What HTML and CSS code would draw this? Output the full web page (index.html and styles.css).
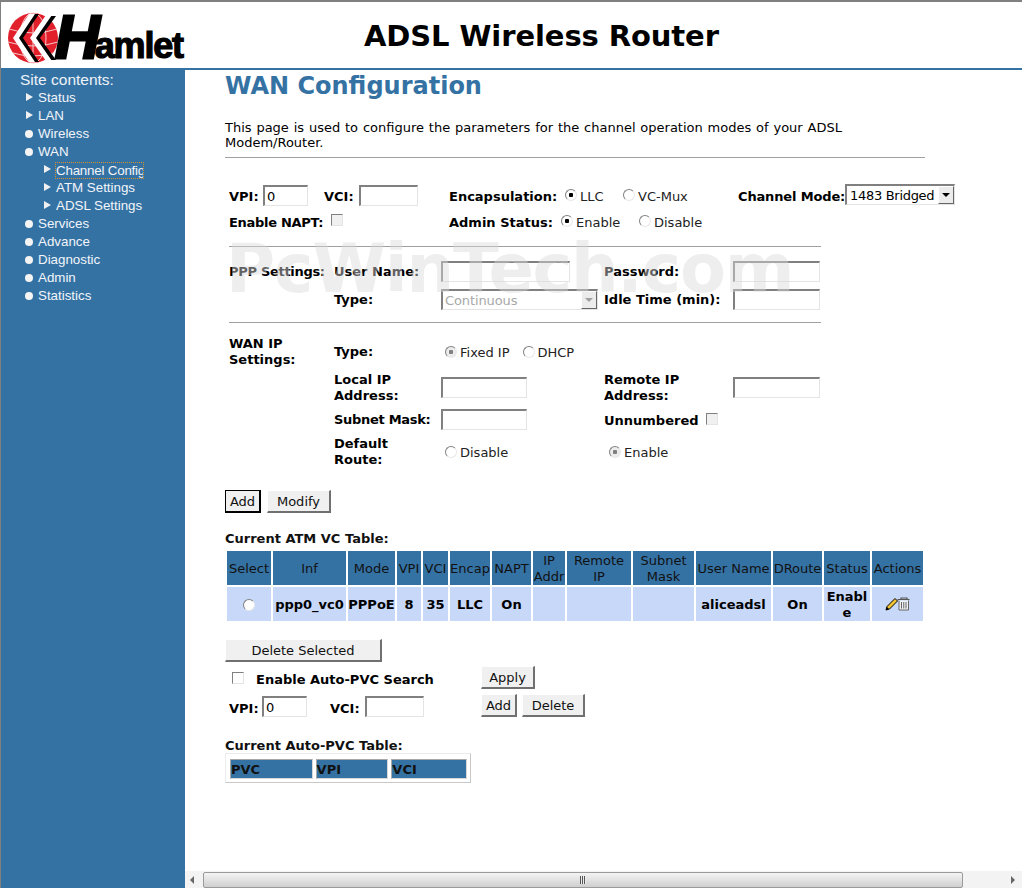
FILE: index.html
```html
<!DOCTYPE html>
<html lang="en">
<head>
  <meta charset="UTF-8" />
  <title>ADSL Wireless Router</title>
  <link rel="stylesheet" href="styles.css">
</head>
<body>
  <div class="page">
    <header class="top">
      <div class="logo">
        <svg class="globe" viewBox="0 0 54 52" width="54" height="52">
          <circle cx="26" cy="26" r="25" fill="#e2202c"/>
          <g fill="none" stroke="#f6c9c9" stroke-width="1">
            <ellipse cx="26" cy="26" rx="13" ry="25"/>
            <path d="M26 1V51M2 17Q26 25 50 17M1 30Q26 38 51 30M6 41Q26 47 46 41"/>
          </g>
          <path d="M26 2H32L16 26L32 50H26L9 26Z" fill="#000"/>
          <path d="M22 2H28L12 26L28 50H22L6 26Z" fill="#fff"/>
          <path d="M43 4H49L33 26L49 48H43L27 26Z" fill="#000"/>
          <path d="M39 3H45L29 26L45 49H39L23 26Z" fill="#fff"/>
        </svg>
        <span class="brand"><span class="brand-h">H</span>amlet</span>
      </div>
      <div class="router-title">ADSL Wireless Router</div>
    </header>

    <div class="layout">
      <nav class="side">
        <div class="side-head">Site contents:</div>
        <ul class="tree">
          <li><span class="tri"></span>Status</li>
          <li><span class="tri"></span>LAN</li>
          <li><span class="dot"></span>Wireless</li>
          <li><span class="dot"></span>WAN</li>
          <li class="sub"><span class="tri"></span><span class="focused">Channel Config</span></li>
          <li class="sub"><span class="tri"></span>ATM Settings</li>
          <li class="sub"><span class="tri"></span>ADSL Settings</li>
          <li><span class="dot"></span>Services</li>
          <li><span class="dot"></span>Advance</li>
          <li><span class="dot"></span>Diagnostic</li>
          <li><span class="dot"></span>Admin</li>
          <li><span class="dot"></span>Statistics</li>
        </ul>
      </nav>

      <div class="right">
        <main class="content">
          <h1 class="page-title">WAN Configuration</h1>
          <p class="intro">This page is used to configure the parameters for the channel operation modes of your ADSL Modem/Router.</p>
          <hr class="rule">

          <form>
            <div class="row row-first">
              <div class="w-vc">
                <b class="lbl-vpi">VPI:</b><input class="txt txt-vpi" type="text" value="0">
                <b class="lbl-vci">VCI:</b><input class="txt txt-vci" type="text">
              </div>
              <b class="w-encap">Encapsulation:</b>
              <label class="opt w-llc"><input class="radio" type="radio" name="encap" checked>LLC</label>
              <label class="opt w-mux"><input class="radio" type="radio" name="encap">VC-Mux</label>
              <b class="w-mode tight-some">Channel Mode:</b>
              <div class="select select-mode">
                <select><option>1483 Bridged</option></select>
                <span class="arrow"></span>
              </div>
            </div>
            <div class="row row-second">
              <div class="w-vc">
                <b class="tight">Enable NAPT:</b><input class="check napt" type="checkbox" disabled>
              </div>
              <b class="w-admin">Admin Status:</b>
              <label class="opt w-enable"><input class="radio" type="radio" name="admin" checked>Enable</label>
              <label class="opt"><input class="radio" type="radio" name="admin">Disable</label>
            </div>

            <hr class="rule rule-short rule-ppp">
            <div class="settings ppp">
              <b class="tight">PPP Settings:</b>
              <b>User Name:</b>
              <input class="txt txt-wide" type="text" disabled>
              <b>Password:</b>
              <input class="txt txt-pass" type="text" disabled>
              <span></span>
              <b>Type:</b>
              <div class="select select-type">
                <select disabled><option>Continuous</option></select>
                <span class="arrow arrow-off"></span>
              </div>
              <b>Idle Time (min):</b>
              <input class="txt txt-pass" type="text" disabled>
            </div>
            <hr class="rule rule-short rule-wan">

            <div class="settings wan">
              <b class="wan-head">WAN IP Settings:</b>
              <b>Type:</b>
              <div class="opts-line">
                <label class="opt"><input class="radio" type="radio" name="iptype" checked disabled>Fixed IP</label>
                <label class="opt"><input class="radio" type="radio" name="iptype" disabled>DHCP</label>
              </div>
              <span></span>
              <span></span>
              <span></span>
              <b>Local IP Address:</b>
              <input class="txt txt-ip" type="text">
              <b>Remote IP Address:</b>
              <input class="txt txt-pass" type="text">
              <span></span>
              <b class="tight">Subnet Mask:</b>
              <input class="txt txt-ip" type="text">
              <div class="unnumbered"><b>Unnumbered</b><input class="check" type="checkbox" disabled></div>
              <span></span>
              <span></span>
              <b class="wrap-label">Default Route:</b>
              <label class="opt opt-in"><input class="radio" type="radio" name="droute" disabled>Disable</label>
              <label class="opt opt-in"><input class="radio" type="radio" name="droute" checked disabled>Enable</label>
              <span></span>
            </div>

            <div class="btn-row">
              <button class="btn btn-default" type="button">Add</button>
              <button class="btn btn-modify" type="button">Modify</button>
            </div>

            <div class="table-title">Current ATM VC Table:</div>
            <table class="vc-table">
              <colgroup>
                <col class="c1"><col class="c2"><col class="c3"><col class="c4"><col class="c5"><col class="c6"><col class="c7">
                <col class="c8"><col class="c9"><col class="c10"><col class="c11"><col class="c12"><col class="c13"><col class="c14">
              </colgroup>
              <tr>
                <th>Select</th><th>Inf</th><th>Mode</th><th>VPI</th><th>VCI</th><th>Encap</th><th>NAPT</th>
                <th>IP Addr</th><th>Remote IP</th><th>Subnet Mask</th><th>User Name</th><th>DRoute</th><th>Status</th><th>Actions</th>
              </tr>
              <tr>
                <td><input class="radio radio-row" type="radio" name="sel"></td>
                <td>ppp0_vc0</td><td>PPPoE</td><td>8</td><td>35</td><td>LLC</td><td>On</td>
                <td></td><td></td><td></td><td>aliceadsl</td><td>On</td><td class="brk">Enable</td>
                <td>
                  <svg class="act" viewBox="0 0 26 14" width="26" height="14">
                    <path d="M1 13L2 9.500L10 1.500L12.500 4L4.500 12Z" fill="#f2c230" stroke="#000" stroke-width="1"/>
                    <path d="M1 13L2 10L4 12Z" fill="#000"/>
                    <path d="M14 3.500V13H23.500V3.500" fill="#eef1f5" stroke="#666" stroke-width="1"/>
                    <path d="M12.500 2.500H24.500M16 2.500V1H22V2.500" fill="none" stroke="#555" stroke-width="1.200"/>
                    <path d="M16.500 5V11.500M18.750 5V11.500M21 5V11.500" fill="none" stroke="#666" stroke-width="1"/>
                  </svg>
                </td>
              </tr>
            </table>

            <button class="btn btn-delete-sel" type="button">Delete Selected</button>

            <div class="auto-pvc">
              <div class="auto-left">
                <div class="auto-check">
                  <input class="check" type="checkbox"><b>Enable Auto-PVC Search</b>
                </div>
                <div class="auto-vc">
                  <b class="lbl-vpi">VPI:</b><input class="txt txt-vpi" type="text" value="0">
                  <b class="lbl-vci-auto">VCI:</b><input class="txt txt-vci" type="text">
                </div>
              </div>
              <div class="auto-right">
                <button class="btn btn-apply" type="button">Apply</button>
                <div class="auto-btns">
                  <button class="btn btn-add" type="button">Add</button>
                  <button class="btn btn-delete" type="button">Delete</button>
                </div>
              </div>
            </div>

            <div class="table-title title-auto">Current Auto-PVC Table:</div>
            <table class="pvc-table">
              <tr><th class="p1">PVC</th><th class="p2">VPI</th><th class="p3">VCI</th></tr>
            </table>
          </form>

          <div class="watermark">PcWinTech.com</div>
        </main>

        <div class="hscroll">
          <span class="hs-arrow hs-left"></span>
          <div class="hs-thumb"><span class="hs-grip"></span></div>
          <span class="hs-arrow hs-right"></span>
        </div>
      </div>
    </div>
  </div>
</body>
</html>
```

FILE: styles.css
```css
* { box-sizing: border-box; }
html, body { margin: 0; height: 100%; overflow: hidden; }
body { font-family: "DejaVu Sans", Verdana, sans-serif; font-size: 13px; line-height: 16px; color: #000; background: #fff; }
b { font-weight: bold; }
.tight { letter-spacing: -.3px; white-space: nowrap; }
.tight-some { letter-spacing: -.15px; }

.page { height: 100vh; display: flex; flex-direction: column; border-top: 2px solid #808080; border-left: 1px solid #808080; }

/* top bar */
.top { height: 68px; flex: none; display: flex; align-items: center; border-bottom: 2px solid #3572a4; background: #fff; }
.logo { width: 184px; height: 66px; flex: none; display: flex; align-items: flex-start; padding: 10px 0 0 6px; }
.globe { flex: none; }
.brand { margin-left: -6px; font-family: "Liberation Sans", Arial, sans-serif; font-weight: bold; font-size: 36px; line-height: 50px; color: #000; letter-spacing: -1.200px; -webkit-text-stroke: 1.200px #000; white-space: nowrap; }
.brand-h { font-size: 62px; font-style: italic; letter-spacing: -5px; line-height: 50px; -webkit-text-stroke: 3px #000; }
.router-title { margin: 2px 0 0 179px; font-size: 29px; line-height: 36px; font-weight: bold; letter-spacing: -.1px; white-space: nowrap; }

.layout { flex: 1; display: flex; min-height: 0; }

/* left menu */
.side { width: 184px; flex: none; background: #3572a4; color: #fff; font-family: "Liberation Sans", Arial, sans-serif; font-size: 13.330px; padding: 2px 0 0 18px; }
.side-head { margin-left: 1px; font-size: 15.500px; line-height: 16px; color: #eef3f8; }
.tree { list-style: none; margin: 1px 0 0; padding: 0; }
.tree li { height: 18px; line-height: 18px; display: flex; align-items: center; padding-left: 5px; color: #f2f5f9; }
.tree li.sub { padding-left: 23px; }
.tri { width: 0; height: 0; margin: 0 5px 0 2px; border-left: 7px solid #f0f0f0; border-top: 4px solid transparent; border-bottom: 4px solid transparent; position: relative; top: -1px; }
.dot { width: 8px; height: 8px; border-radius: 50%; background: #f4f4f4; margin: 0 5px 0 1px; }
.focused { display: inline-block; width: 87px; height: 15px; line-height: 15px; letter-spacing: -.2px; overflow: hidden; white-space: nowrap; outline: 1px dotted #d8902c; }

/* main area */
.right { flex: 1; min-width: 0; display: flex; flex-direction: column; }
.content { flex: 1; min-height: 0; position: relative; overflow: hidden; padding: 0 0 0 40px; }
.page-title { margin: 0; font-size: 24px; line-height: 32px; font-weight: bold; color: #3572a4; }
.intro { margin: 18px 0 0; width: 700px; line-height: 15px; word-spacing: .7px; }
.rule { margin: 0; border: 0; border-top: 1px solid #a0a0a0; height: 1px; width: 700px; }
.intro + .rule { margin-top: 7px; }
.rule-short { width: 592px; margin-left: 4px; }
.rule-ppp { margin-top: 14px; }
.rule-wan { margin-top: 12px; }

.row { display: flex; align-items: center; padding-left: 4px; height: 21px; }
.row-first { margin-top: 27px; }
.row-first .w-vc b, .row-first > b, .row-first .opt { margin-top: 2px; }
.row-second { margin-top: 5px; }
.row-second .w-vc b, .row-second > b, .row-second .opt { margin-top: 2px; }
.w-vc { width: 220px; display: flex; align-items: center; flex: none; }
.w-encap { width: 116px; flex: none; }
.w-llc { width: 58px; flex: none; }
.w-mux { width: 115px; flex: none; }
.w-mode { width: 107px; flex: none; white-space: nowrap; }
.w-admin { width: 112px; flex: none; }
.w-enable { width: 78px; flex: none; }
.lbl-vpi { width: 34px; flex: none; }
.lbl-vci { width: 35px; flex: none; margin-left: 16px; }
.lbl-vci-auto { width: 35px; flex: none; margin-left: 23px; }

.txt { height: 21px; padding: 1px 2px 0 2px; margin: 0; font: 13px "DejaVu Sans", Verdana, sans-serif; color: #000; background: #fff; border: 2px solid; border-color: #808080 #e4e4e4 #e4e4e4 #808080; border-width: 2px 1px 1px 2px; border-radius: 0; outline: 0; }
.txt-vpi { width: 45px; }
.txt-vci { width: 59px; }
.txt-wide { width: 129px; }
.txt-pass { width: 87px; }
.txt-ip { width: 86px; }

.radio { appearance: none; -webkit-appearance: none; width: 12px; height: 12px; margin: 0 3px 3px 0; border-radius: 50%; flex: none; border: 1px solid; border-color: #808080 #e8e8e8 #e8e8e8 #808080; background: #fff; }
.radio:checked { background: radial-gradient(circle, #000 0 2px, #fff 2.500px); }
.radio:disabled { background: #fff; }
.radio:checked:disabled { background: radial-gradient(circle, #808080 0 2px, #ececec 2.500px); }
.radio-row { margin: -1px 0 0; vertical-align: middle; }
.check { appearance: none; -webkit-appearance: none; width: 12px; height: 12px; margin: 0; flex: none; border: 1px solid; border-color: #808080 #e4e4e4 #e4e4e4 #808080; background: #fff; }
.check:disabled { background: #f0f0f0; }
.napt { margin: 0 0 3px 8px; }
.opt { display: inline-flex; align-items: center; color: #222; white-space: nowrap; }

.select { position: relative; display: inline-flex; flex: none; }
.select select { appearance: none; -webkit-appearance: none; width: 100%; height: 100%; margin: 0; padding: 0 0 0 3px; font: 13px "DejaVu Sans", Verdana, sans-serif; letter-spacing: -.3px; color: #000; background: #fff; border: 2px solid; border-color: #808080 #e4e4e4 #e4e4e4 #808080; border-width: 2px 1px 1px 2px; border-radius: 0; outline: 0; opacity: 1; }
.select select:disabled { padding-left: 2px; letter-spacing: -.1px; color: #a8a8a8; }
.select-mode { width: 110px; height: 21px; margin-top: -2px; }
.select-type { width: 157px; height: 21px; }
.arrow { position: absolute; top: 2px; right: 1px; width: 16px; height: 18px; background: #ececec; border: 1px solid; border-color: #fff #666 #666 #fff; }
.arrow::after { content: ""; position: absolute; left: 3px; top: 6px; border-top: 4px solid #000; border-left: 4px solid transparent; border-right: 4px solid transparent; }
.arrow-off::after { border-top-color: #a0a0a0; }

.settings { display: grid; grid-template-columns: 105px 107px 163px 129px 88px; margin-left: 4px; align-items: center; }
.ppp { margin-top: 14px; grid-auto-rows: 21px; row-gap: 7px; }
.wan { margin-top: 8px; grid-template-rows: 40px 32px 32px 32px; }
.wan b { padding-top: 2px; }
.wan .wan-head { align-self: start; padding-top: 0; margin-top: 5px; width: 80px; }
.wan .opt { margin-top: 4px; }
.wrap-label { width: 90px; }
.opts-line { display: flex; gap: 13px; padding-left: 4px; }
.opt-in { padding-left: 4px; }
.opt-in + .opt-in { padding-left: 5px; }
.unnumbered { display: flex; align-items: center; white-space: nowrap; }
.unnumbered b { padding-top: 4px; }
.unnumbered .check { margin: 0 0 0 7px; }

.btn { height: 23px; margin: 0; padding: 0; font: 13px "DejaVu Sans", Verdana, sans-serif; color: #111; background: #f0f0f0; border: 1px solid; border-color: #fff #707070 #707070 #fff; border-width: 1px 2px 2px 1px; border-radius: 0; }
.btn-default { border: 1px solid #000; border-right-width: 2px; border-bottom-width: 2px; }
.btn-row { display: flex; gap: 6px; margin-top: 23px; }
.btn-default { width: 36px; }
.btn-modify { width: 64px; }

.table-title { margin-top: 18px; font-weight: bold; color: #111; }
.vc-table { margin-top: 2px; width: 700px; table-layout: fixed; border-collapse: separate; border-spacing: 2px; }
.vc-table th, .vc-table td { padding: 2px 0 0; text-align: center; overflow: hidden; }
.vc-table tr { height: 34px; }
.vc-table th { background: #3572a4; font-weight: normal; color: #111; }
.vc-table td { background: #c8d8f8; font-weight: bold; }
.brk { word-break: break-all; }
.c1 { width: 44px; } .c2 { width: 73px; } .c3 { width: 47px; } .c4 { width: 24px; }
.c5 { width: 25px; } .c6 { width: 40px; } .c7 { width: 39px; } .c8 { width: 32px; }
.c9 { width: 64px; } .c10 { width: 61px; } .c11 { width: 75px; } .c12 { width: 49px; }
.c13 { width: 46px; } .c14 { width: 51px; }
.act { vertical-align: middle; margin-top: -3px; }

.btn-delete-sel { display: block; width: 157px; margin-top: 16px; }
.auto-pvc { display: flex; margin-top: 4px; }
.auto-left { width: 256px; flex: none; padding-top: 4px; }
.auto-check { display: flex; align-items: center; height: 16px; margin: 0 0 0 7px; }
.auto-check .check { margin-right: 12px; }
.auto-check b { padding-top: 4px; }
.auto-vc { display: flex; align-items: center; margin-top: 9px; padding-left: 4px; }
.auto-vc b { padding-top: 6px; }
.auto-vc .lbl-vpi { width: 33px; }
.auto-right { display: flex; flex-direction: column; align-items: flex-start; gap: 5px; }
.auto-btns { display: flex; gap: 5px; }
.btn-apply { width: 54px; }
.btn-add { width: 36px; }
.btn-delete { width: 63px; }

.table-title.title-auto { margin-top: 21px; margin-bottom: -1px; }
.pvc-table { width: 246px; height: 28px; border-collapse: separate; border-spacing: 3px; padding: 2px 0 0 1px; border: 1px solid; border-color: #ececec #c8c8c8 #c8c8c8 #ececec; }
.pvc-table th { padding: 2px 0 0; background: #3572a4; text-align: left; font-weight: bold; color: #111; border: 1px solid; border-color: #a8a8a8 #d8d8d8 #d8d8d8 #a8a8a8; height: 20px; line-height: 16px; }
.p1 { width: 84px; } .p2 { width: 74px; } .p3 { width: 77px; }

.watermark { position: absolute; left: 41px; top: 166px; font-size: 67px; line-height: 66px; letter-spacing: -1.300px; font-weight: bold; color: rgba(217, 217, 217, .45); white-space: nowrap; pointer-events: none; }

/* bottom scrollbar */
.hscroll { height: 17px; flex: none; display: flex; align-items: stretch; background: #f3f3f3; padding: 1px 0 0 0; }
.hs-arrow { width: 18px; flex: none; position: relative; }
.hs-arrow::after { content: ""; position: absolute; top: 4px; border-top: 4px solid transparent; border-bottom: 4px solid transparent; }
.hs-left::after { left: 5px; border-right: 4px solid #666; }
.hs-right { margin-left: auto; }
.hs-right::after { right: 7px; border-left: 4px solid #666; }
.hs-thumb { width: 760px; flex: none; display: flex; align-items: center; justify-content: center; background: linear-gradient(#f4f4f4, #cfcfcf); border: 1px solid #9a9a9a; border-radius: 2px; }
.hs-grip { width: 6px; height: 8px; background: repeating-linear-gradient(90deg, #555 0 1px, #eee 1px 2px); }
```
